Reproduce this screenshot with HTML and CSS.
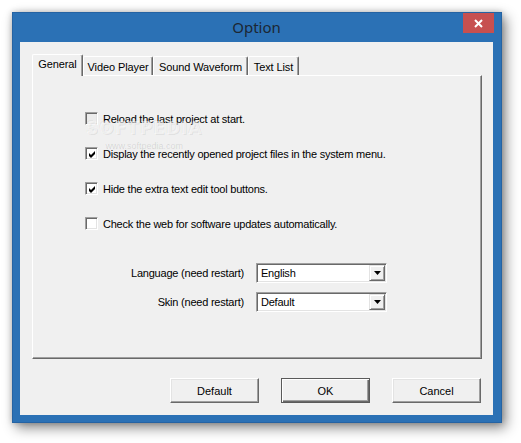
FILE: index.html
```html
<!DOCTYPE html>
<html>
<head>
<meta charset="utf-8">
<title>Option</title>
<link rel="stylesheet" href="styles.css">
</head>
<body>
<div class="window">
  <div class="titlebar">
    <span></span>
    <span class="title">Option</span>
    <span class="close"><svg width="9" height="9" viewBox="0 0 9 9"><path d="M1 1L8 8M8 1L1 8" stroke="#fff" stroke-width="2" fill="none"/></svg></span>
  </div>
  <div class="client">
    <div class="tabs">
      <div class="tab active tab-general">General</div>
      <div class="tab tab-video">Video Player</div>
      <div class="tab tab-sound">Sound Waveform</div>
      <div class="tab tab-text">Text List</div>
    </div>
    <div class="panel">
      <div class="checks">
        <label class="row"><span class="box dim"></span><span>Reload the last project at start.</span></label>
        <label class="row"><span class="box"><svg width="9" height="9" viewBox="0 0 9 9"><path d="M1 3L3 5L7 1L7 4L3 8L1 6Z" fill="#000"/></svg></span><span>Display the recently opened project files in the system menu.</span></label>
        <label class="row"><span class="box"><svg width="9" height="9" viewBox="0 0 9 9"><path d="M1 3L3 5L7 1L7 4L3 8L1 6Z" fill="#000"/></svg></span><span>Hide the extra text edit tool buttons.</span></label>
        <label class="row"><span class="box"></span><span>Check the web for software updates automatically.</span></label>
      </div>
      <div class="combos">
        <span class="clabel">Language (need restart)</span>
        <div class="combo"><span class="cval">English</span><span class="drop"><svg width="7" height="4" viewBox="0 0 7 4"><path d="M0 0H7L3.5 4Z" fill="#000"/></svg></span></div>
        <span class="clabel">Skin (need restart)</span>
        <div class="combo"><span class="cval">Default</span><span class="drop"><svg width="7" height="4" viewBox="0 0 7 4"><path d="M0 0H7L3.5 4Z" fill="#000"/></svg></span></div>
      </div>
      <div class="watermark">
        <span class="wm-big">SOFTPEDIA</span>
        <span class="wm-small">www.softpedia.com</span>
      </div>
    </div>
    <div class="buttons">
      <div class="btn">Default</div>
      <div class="btn default">OK</div>
      <div class="btn">Cancel</div>
    </div>
  </div>
</div>
</body>
</html>
```
FILE: styles.css
```css
html, body {
  margin: 0;
  padding: 0;
}
body {
  background: #ffffff;
  width: 521px;
  height: 443px;
  overflow: hidden;
  font-family: "Liberation Sans", Arial, sans-serif;
  font-size: 11px;
  color: #000;
}
.window {
  margin: 12px 0 0 12px;
  width: 490px;
  height: 411px;
  box-sizing: border-box;
  background: #2b71b5;
  border: 1px solid #2563a3;
  box-shadow: 4px 5px 12px rgba(0,0,0,0.45), 0 0 6px rgba(0,0,0,0.22);
  padding: 0 8px 7px 7px;
  display: flex;
  flex-direction: column;
}
.titlebar {
  height: 29px;
  flex: none;
  display: grid;
  grid-template-columns: 1fr auto 1fr;
  align-items: start;
}
.title {
  font-family: "Noto Sans", "Open Sans", sans-serif;
  font-size: 15px;
  line-height: 29px;
  color: #1c2733;
}
.close {
  justify-self: end;
  width: 31px;
  height: 20px;
  background: #c75050;
  display: flex;
  align-items: center;
  justify-content: center;
  margin-right: -1px;
}
.client {
  height: 373px;
  flex: none;
  box-sizing: border-box;
  background: #f0f0f0;
  padding: 12px 11px 0 12px;
  display: flex;
  flex-direction: column;
}
.tabs {
  display: flex;
  align-items: flex-end;
  height: 21px;
  flex: none;
}
.tab {
  height: 19px;
  box-sizing: border-box;
  border-left: 1px solid #ffffff;
  border-top: 1px solid #ffffff;
  border-right: 1px solid #696969;
  box-shadow: inset -1px 0 0 #a0a0a0;
  border-radius: 2px 2px 0 0;
  display: flex;
  align-items: center;
  justify-content: center;
  background: #f0f0f0;
  padding-top: 1px;
  letter-spacing: -0.1px;
}
.tab.active {
  height: 22px;
  margin-bottom: -1px;
  position: relative;
  z-index: 1;
  padding-top: 0;
  padding-bottom: 3px;
}
.tab-general { width: 51px; }
.tab-video { width: 70px; }
.tab-sound { width: 95px; }
.tab-text { width: 51px; }
.panel {
  height: 284px;
  flex: none;
  box-sizing: border-box;
  border-top: 1px solid #ffffff;
  border-left: 1px solid #ffffff;
  border-right: 1px solid #696969;
  border-bottom: 1px solid #696969;
  box-shadow: inset -1px -1px 0 #a0a0a0;
  padding: 36px 0 0 52px;
  position: relative;
  letter-spacing: -0.22px;
}
.checks {
  display: flex;
  flex-direction: column;
  gap: 22px;
}
.row {
  display: flex;
  align-items: center;
  height: 13px;
  gap: 5px;
  white-space: nowrap;
}
.box {
  width: 13px;
  height: 13px;
  box-sizing: border-box;
  border-top: 1px solid #a0a0a0;
  border-left: 1px solid #a0a0a0;
  border-bottom: 1px solid #ffffff;
  border-right: 1px solid #ffffff;
  box-shadow: inset 1px 1px 0 #696969, inset -1px -1px 0 #e3e3e3;
  background: #ffffff;
  display: flex;
  align-items: center;
  justify-content: center;
  padding: 1px 0 0 1px;
  flex: none;
}
.box.dim {
  background: #ececec;
}
.combos {
  margin-top: 33px;
  display: grid;
  grid-template-columns: 159px 131px;
  column-gap: 12px;
  row-gap: 9px;
}
.clabel {
  text-align: right;
  line-height: 20px;
  white-space: nowrap;
}
.combo {
  height: 20px;
  box-sizing: border-box;
  border-top: 1px solid #a0a0a0;
  border-left: 1px solid #a0a0a0;
  border-bottom: 1px solid #ffffff;
  border-right: 1px solid #ffffff;
  box-shadow: inset 1px 1px 0 #696969, inset -1px -1px 0 #e3e3e3;
  background: #ffffff;
  display: flex;
  align-items: center;
  padding: 1px 1px 1px 4px;
}
.cval {
  flex: 1;
  line-height: 16px;
}
.drop {
  width: 16px;
  height: 16px;
  box-sizing: border-box;
  background: #f0f0f0;
  border-top: 1px solid #e3e3e3;
  border-left: 1px solid #e3e3e3;
  border-right: 1px solid #696969;
  border-bottom: 1px solid #696969;
  box-shadow: inset 1px 1px 0 #ffffff, inset -1px -1px 0 #a0a0a0;
  display: flex;
  align-items: center;
  justify-content: center;
}
.watermark {
  position: absolute;
  left: 53px;
  top: 43px;
  display: flex;
  flex-direction: column;
  align-items: center;
  pointer-events: none;
  letter-spacing: 0;
}
.wm-big {
  font-family: "DejaVu Sans", sans-serif;
  font-size: 17px;
  font-weight: bold;
  letter-spacing: 1px;
  color: rgba(255,255,255,0.55);
  text-shadow: 1px 1px 0 rgba(0,0,0,0.07), -1px -1px 0 rgba(0,0,0,0.04);
  line-height: 18px;
}
.wm-small {
  font-size: 9px;
  color: rgba(0,0,0,0.12);
  line-height: 10px;
  margin-top: 4px;
}
.buttons {
  margin-top: 19px;
  display: flex;
  justify-content: flex-end;
  gap: 22px;
  padding-right: 1px;
}
.btn {
  width: 89px;
  height: 25px;
  box-sizing: border-box;
  background: #f0f0f0;
  border-top: 1px solid #ffffff;
  border-left: 1px solid #ffffff;
  border-right: 1px solid #696969;
  border-bottom: 1px solid #696969;
  box-shadow: inset -1px -1px 0 #a0a0a0, inset 1px 1px 0 #e3e3e3;
  display: flex;
  align-items: center;
  justify-content: center;
}
.btn.default {
  border: 1px solid #5a5a5a;
  box-shadow: inset 1px 1px 0 #ffffff, inset -1px -1px 0 #696969, inset -2px -2px 0 #a0a0a0;
}
```
